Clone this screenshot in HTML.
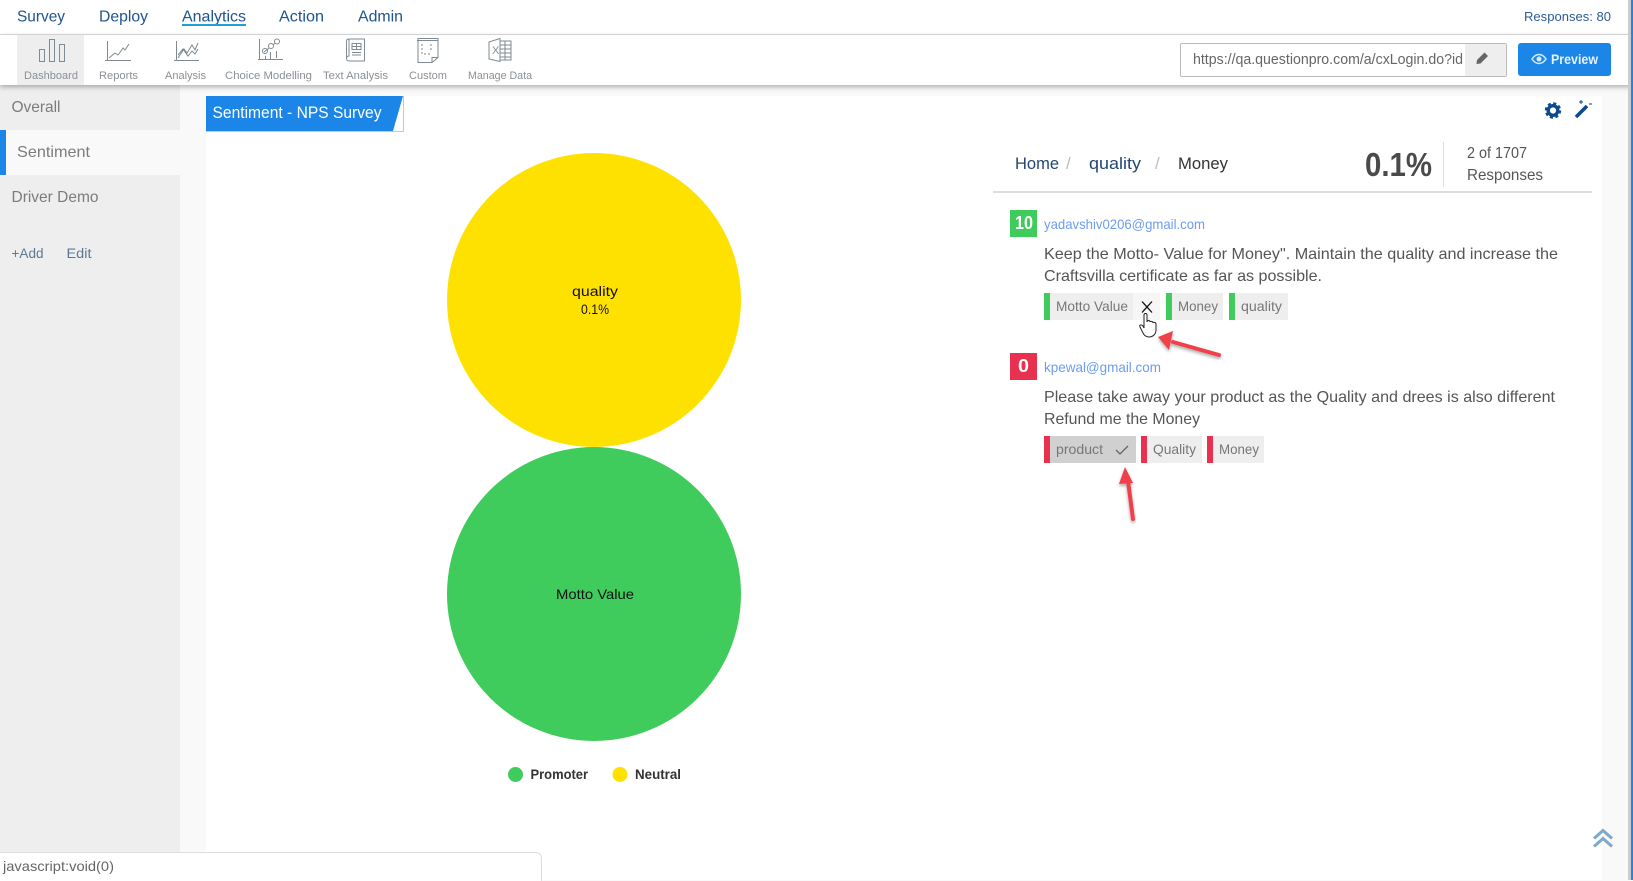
<!DOCTYPE html>
<html lang="en"><head><meta charset="utf-8"><title>Sentiment - NPS Survey</title>
<style>
html,body{margin:0;padding:0;width:1633px;height:880px;overflow:hidden;background:#f9f9f9;font-family:"Liberation Sans",sans-serif}
.b{position:absolute}
svg{position:absolute;left:0;top:0}
text{font-family:"Liberation Sans",sans-serif;white-space:pre}
.nav{font-size:16px;fill:#20538f}
.lb{font-size:11px;fill:#8b9095}
.sd{font-size:16px;fill:#7c7c7c}
.tg{font-size:14px;fill:#777}
.bd{font-size:16px;fill:#555}
.em{font-size:14px;fill:#6d9cf0}
.ic{fill:none;stroke:#7f8a92;stroke-width:1}
</style></head><body>
<div class="b" style="left:0;top:0;width:1633px;height:34px;background:#fff"></div>
<div class="b" style="left:0;top:34px;width:1633px;height:1px;background:#ddd"></div>
<div class="b" style="left:0;top:35px;width:1633px;height:50px;background:#fff;box-shadow:0 2px 5px rgba(0,0,0,.3);z-index:2"></div>
<div class="b" style="left:17px;top:35px;width:67px;height:50px;background:#eee;z-index:2"></div>
<div class="b" style="left:0;top:85px;width:180px;height:795px;background:#eee"></div>
<div class="b" style="left:0;top:130px;width:180px;height:45px;background:#f9f9f9"></div>
<div class="b" style="left:0;top:130px;width:6px;height:45px;background:#1b86e8"></div>
<div class="b" style="left:206px;top:96px;width:1396px;height:784px;background:#fff"></div>
<div class="b" style="left:1628px;top:0;width:3px;height:880px;background:#ccc;z-index:3"></div>
<div class="b" style="left:1631px;top:0;width:2px;height:880px;background:#1b86e8;z-index:3"></div>
<div class="b" style="left:1180px;top:43px;width:325px;height:32px;border:1px solid #bbb;border-radius:2px;background:#fff;z-index:3"></div>
<div class="b" style="left:1465px;top:44px;width:41px;height:32px;background:#eee;z-index:3"></div>
<div class="b" style="left:1518px;top:43px;width:93px;height:33px;background:#1b86e8;border-radius:3px;z-index:3"></div>
<div class="b" style="left:993px;top:191px;width:599px;height:2px;background:#ddd"></div>
<div class="b" style="left:1443px;top:142px;width:1px;height:45px;background:#ddd"></div>
<div class="b" style="left:0;top:852px;width:541px;height:28px;background:#fff;border:1px solid #ddd;border-left:0;border-bottom:0;border-top-right-radius:6px;z-index:4"></div>

<svg width="1633" height="880" viewBox="0 0 1633 880" style="z-index:5">
<defs><filter id="sh" x="-20%" y="-20%" width="140%" height="140%"><feDropShadow dx="0" dy="2" stdDeviation="1.5" flood-color="#000" flood-opacity=".35"/></filter></defs>
<!-- nav -->
<text class="nav" x="17" y="21.500" textLength="48" lengthAdjust="spacingAndGlyphs">Survey</text>
<text class="nav" x="99" y="21.500" textLength="49" lengthAdjust="spacingAndGlyphs">Deploy</text>
<text class="nav" x="182" y="21.500" textLength="64" lengthAdjust="spacingAndGlyphs">Analytics</text>
<rect x="182" y="24" width="64" height="2" fill="#1fa0d8"/>
<text class="nav" x="279" y="21.500" textLength="45" lengthAdjust="spacingAndGlyphs">Action</text>
<text class="nav" x="358" y="21.500" textLength="45" lengthAdjust="spacingAndGlyphs">Admin</text>
<text x="1524" y="21" font-size="13" fill="#2b5c99" textLength="87" lengthAdjust="spacingAndGlyphs">Responses: 80</text>
<!-- toolbar labels -->
<text class="lb" x="24" y="79" textLength="54" lengthAdjust="spacingAndGlyphs">Dashboard</text>
<text class="lb" x="99" y="79" textLength="39" lengthAdjust="spacingAndGlyphs">Reports</text>
<text class="lb" x="165" y="79" textLength="41" lengthAdjust="spacingAndGlyphs">Analysis</text>
<text class="lb" x="225" y="79" textLength="87" lengthAdjust="spacingAndGlyphs">Choice Modelling</text>
<text class="lb" x="323" y="79" textLength="65" lengthAdjust="spacingAndGlyphs">Text Analysis</text>
<text class="lb" x="409" y="79" textLength="38" lengthAdjust="spacingAndGlyphs">Custom</text>
<text class="lb" x="468" y="79" textLength="64" lengthAdjust="spacingAndGlyphs">Manage Data</text>
<!-- toolbar icons -->
<g class="ic">
<path d="M39.500 49.500h5v12h-5zM49.500 39.500h5v22h-5zM59.500 44.500h5v17h-5z"/>
<path d="M107.500 41v20M105 60.500h26M109 58l6-5 3 2 5-7 2 2 4-6"/>
<path d="M176.500 41v20M174 60.500h25M178 58l6-9 3 4 5-8 3 5 3-7M178 55l5-6 5 7 4-5 3 3 3-5"/>
<path d="M259.500 39v20M258 59.500h25M270.500 52v7M276.500 51v7M265.500 56v3"/>
<circle cx="265" cy="51" r="2.500"/><circle cx="271" cy="46" r="2.500"/><circle cx="277" cy="41.500" r="2.500"/>
<path d="M264 52l5-4M273 45l2-2"/>
<path d="M349 39h15.500v22h-15.500c-2 0-2.500-1.500-2.500-3V41c0-1.500 1-2 2.500-2zM346.500 58c.5-1.500 1-2 2.500-2v-17"/>
<path d="M352 43.500h9v6h-9zM352 46.500h9M356.500 43.500v6M352 52.500h9M352 55h9"/>
<path d="M418 38.500h20v19l-6 5h-14zM417 40.500h21M438 57.500h-6v5"/>
<path d="M422 44v10h9M431 44v6" stroke-dasharray="2 2"/>
<path d="M489 42l11-3.500v23L489 59zM500 41h11v19h-11zM500 45h11M500 49h11M500 53h11M500 57h11M505 41v19"/>
</g>
<text x="492" y="54" font-size="11" fill="#7f8a92">X</text>
<!-- url / preview -->
<text x="1193" y="64" font-size="14.500" fill="#666" textLength="270" lengthAdjust="spacingAndGlyphs">https://qa.questionpro.com/a/cxLogin.do?id</text>
<path d="M1477 60l7.500-7.500 3.500 3.500-7.500 7.500-4 .5z" fill="#666"/>
<path d="M1532 59c4-6 10-6 14 0-4 6-10 6-14 0z" fill="none" stroke="#d6eaff" stroke-width="1.500"/><circle cx="1539" cy="59" r="2.500" fill="#d6eaff"/>
<text x="1551" y="64" font-size="14" font-weight="bold" fill="#e6f2ff" textLength="47" lengthAdjust="spacingAndGlyphs">Preview</text>
<!-- sidebar -->
<text class="sd" x="11.500" y="112" textLength="49" lengthAdjust="spacingAndGlyphs">Overall</text>
<text class="sd" x="17" y="157" textLength="73" lengthAdjust="spacingAndGlyphs">Sentiment</text>
<text class="sd" x="11.500" y="202" textLength="87" lengthAdjust="spacingAndGlyphs">Driver Demo</text>
<text x="11.500" y="258" font-size="13.500" fill="#5d7896" textLength="32" lengthAdjust="spacingAndGlyphs">+Add</text>
<text x="66.500" y="258" font-size="13.500" fill="#5d7896" textLength="25" lengthAdjust="spacingAndGlyphs">Edit</text>
<!-- title -->
<rect x="206.500" y="96.500" width="197" height="35" fill="#fff" stroke="#a9d1f5"/>
<path d="M206 96H403L393 131H206z" fill="#1b86e8"/>
<text x="212.500" y="118" font-size="17" fill="#fff" textLength="169" lengthAdjust="spacingAndGlyphs">Sentiment - NPS Survey</text>
<!-- circles -->
<circle cx="594" cy="300" r="147" fill="#ffe100"/>
<circle cx="594" cy="594" r="147" fill="#3fcc5c"/>
<text x="572" y="296" font-size="13.500" fill="#111" textLength="46" lengthAdjust="spacingAndGlyphs">quality</text>
<text x="581" y="314" font-size="14" fill="#111" textLength="28" lengthAdjust="spacingAndGlyphs">0.1%</text>
<text x="556" y="599" font-size="14" fill="#111" textLength="78" lengthAdjust="spacingAndGlyphs">Motto Value</text>
<circle cx="515.500" cy="774.500" r="7.500" fill="#3fcc5c"/>
<text x="530.500" y="779" font-size="14" font-weight="bold" fill="#333" textLength="57.500" lengthAdjust="spacingAndGlyphs">Promoter</text>
<circle cx="620" cy="774.500" r="7.500" fill="#ffe100"/>
<text x="635" y="779" font-size="14" font-weight="bold" fill="#333" textLength="46" lengthAdjust="spacingAndGlyphs">Neutral</text>
<!-- top-right icons -->
<circle cx="1553" cy="110.500" r="4.800" fill="none" stroke="#0a4a8f" stroke-width="3.400"/>
<circle cx="1553" cy="110.500" r="7" fill="none" stroke="#0a4a8f" stroke-width="2.400" stroke-dasharray="3 2.500"/>
<path d="M1576 117l11-11" stroke="#0a4a8f" stroke-width="3.500" fill="none"/>
<path d="M1579 102h4M1581 100v4M1589 104h3" stroke="#0a4a8f" stroke-width="1" fill="none"/>
<!-- breadcrumb -->
<text x="1015" y="169" font-size="17" fill="#24476f" textLength="44" lengthAdjust="spacingAndGlyphs">Home</text>
<text x="1066" y="169" font-size="17" fill="#bbb">/</text>
<text x="1089" y="169" font-size="17" fill="#24476f" textLength="52" lengthAdjust="spacingAndGlyphs">quality</text>
<text x="1155" y="169" font-size="17" fill="#bbb">/</text>
<text x="1178" y="169" font-size="17" fill="#333" textLength="50" lengthAdjust="spacingAndGlyphs">Money</text>
<text x="1365" y="176" font-size="33" font-weight="bold" fill="#4a4a4a" textLength="67" lengthAdjust="spacingAndGlyphs">0.1%</text>
<text class="bd" x="1467" y="158" textLength="60" lengthAdjust="spacingAndGlyphs">2 of 1707</text>
<text class="bd" x="1467" y="180" textLength="76" lengthAdjust="spacingAndGlyphs">Responses</text>
<!-- item 1 -->
<rect x="1010" y="210" width="27" height="27" fill="#3fcc5c"/>
<text x="1015" y="229" font-size="18" font-weight="bold" fill="#fff" textLength="18" lengthAdjust="spacingAndGlyphs">10</text>
<text class="em" x="1044" y="229" textLength="161" lengthAdjust="spacingAndGlyphs">yadavshiv0206@gmail.com</text>
<text class="bd" x="1044" y="259" textLength="514" lengthAdjust="spacingAndGlyphs">Keep the Motto- Value for Money". Maintain the quality and increase the</text>
<text class="bd" x="1044" y="281" textLength="278" lengthAdjust="spacingAndGlyphs">Craftsvilla certificate as far as possible.</text>
<rect x="1044" y="293" width="89" height="27" fill="#eee"/><rect x="1133" y="293" width="27" height="27" fill="#f6f6f6"/><rect x="1044" y="293" width="6" height="27" fill="#3fcc5c"/>
<rect x="1166" y="293" width="57" height="27" fill="#eee"/><rect x="1166" y="293" width="6" height="27" fill="#3fcc5c"/>
<rect x="1229" y="293" width="59" height="27" fill="#eee"/><rect x="1229" y="293" width="6" height="27" fill="#3fcc5c"/>
<text class="tg" x="1056" y="311" textLength="72" lengthAdjust="spacingAndGlyphs">Motto Value</text>
<text class="tg" x="1178" y="311" textLength="40" lengthAdjust="spacingAndGlyphs">Money</text>
<text class="tg" x="1241" y="311" textLength="41" lengthAdjust="spacingAndGlyphs">quality</text>
<path d="M1142 301.500l10 11M1152 301.500l-10 11" stroke="#111" stroke-width="1.300" fill="none"/>
<path d="M1144 315c0-2 3-2 3 0v7c0-2 3-2 3 0 0-1 3-1 3 1 0-1 3-1 3 1v6c0 4-3 7-7 7-3 0-5-2-6-4l-3-6c-1-2 1-3 3-1l1 2z" fill="#fff" stroke="#222" stroke-width="1"/>
<g filter="url(#sh)"><path d="M1219 355l-46-13" stroke="#f0414a" stroke-width="4" stroke-linecap="round" fill="none"/><path d="M1158 337l15-6-4 19z" fill="#f0414a"/></g>
<!-- item 2 -->
<rect x="1010" y="353" width="27" height="27" fill="#e8304f"/>
<text x="1018" y="372" font-size="18" font-weight="bold" fill="#fff" textLength="11" lengthAdjust="spacingAndGlyphs">0</text>
<text class="em" x="1044" y="372" textLength="117" lengthAdjust="spacingAndGlyphs">kpewal@gmail.com</text>
<text class="bd" x="1044" y="402" textLength="511" lengthAdjust="spacingAndGlyphs">Please take away your product as the Quality and drees is also different</text>
<text class="bd" x="1044" y="424" textLength="156" lengthAdjust="spacingAndGlyphs">Refund me the Money</text>
<rect x="1044" y="436" width="92" height="27" fill="#d0d0d0"/><rect x="1044" y="436" width="6" height="27" fill="#e8304f"/>
<rect x="1141" y="436" width="61" height="27" fill="#eee"/><rect x="1141" y="436" width="6" height="27" fill="#e8304f"/>
<rect x="1207" y="436" width="57" height="27" fill="#eee"/><rect x="1207" y="436" width="6" height="27" fill="#e8304f"/>
<text class="tg" x="1056" y="454" textLength="47" lengthAdjust="spacingAndGlyphs">product</text>
<text class="tg" x="1153" y="454" textLength="43" lengthAdjust="spacingAndGlyphs">Quality</text>
<text class="tg" x="1219" y="454" textLength="40" lengthAdjust="spacingAndGlyphs">Money</text>
<path d="M1116 450l4 4 8-8" stroke="#666" stroke-width="1.300" fill="none"/>
<g filter="url(#sh)"><path d="M1133 519l-5-38" stroke="#f0414a" stroke-width="4" stroke-linecap="round" fill="none"/><path d="M1125 467l8 16-14 1z" fill="#f0414a"/></g>
<!-- scroll top -->
<path d="M1594 838.500l9-8 9 8M1594 846.500l9-8 9 8" stroke="#7fa8cf" stroke-width="3" fill="none"/>
<!-- status -->
<text x="3" y="871" font-size="14" fill="#666" textLength="111" lengthAdjust="spacingAndGlyphs">javascript:void(0)</text>
</svg>
</body></html>
